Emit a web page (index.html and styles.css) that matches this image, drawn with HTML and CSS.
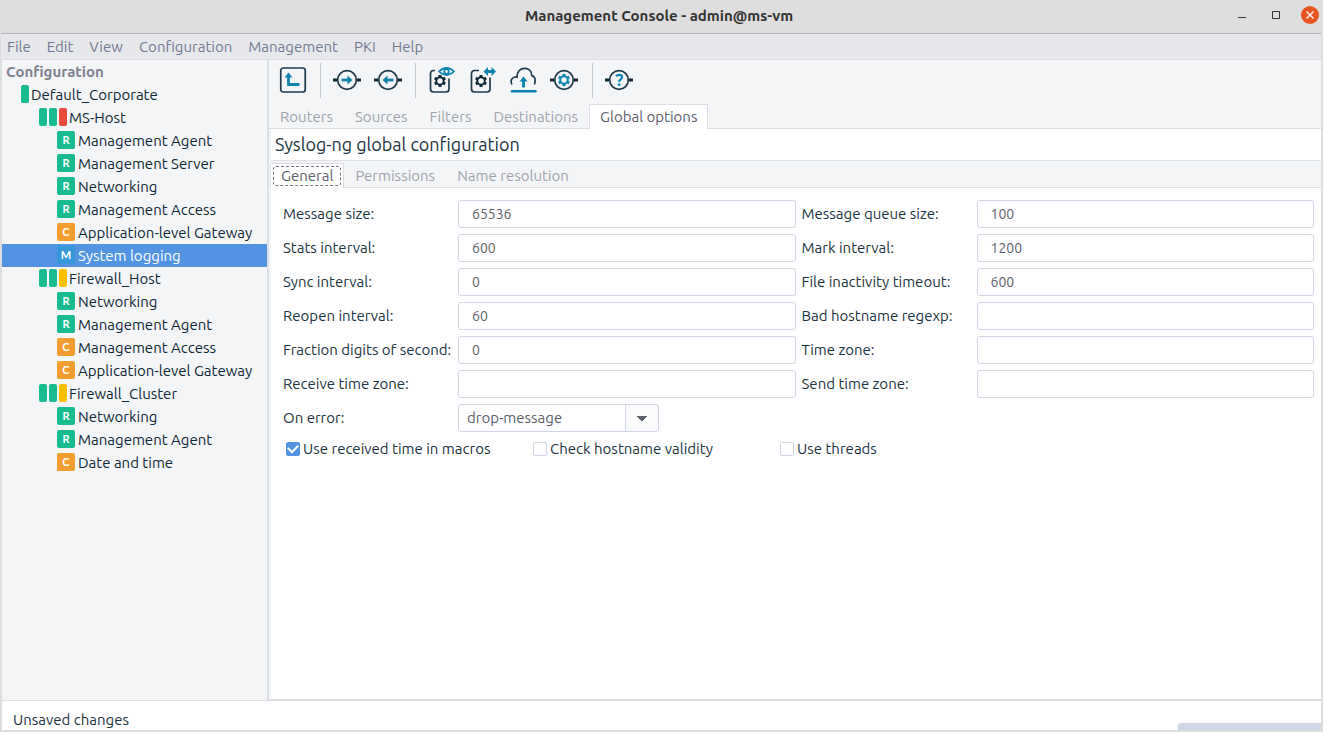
FILE: index.html
```html
<!DOCTYPE html>
<html lang="en">
<head>
<meta charset="utf-8">
<title>Management Console - admin@ms-vm</title>
<link rel="stylesheet" href="styles.css">
</head>
<body>
<svg class="defs" aria-hidden="true">
  <symbol id="gear" viewBox="-7 -7 14 14">
    <circle r="3.700" fill="none" stroke="currentColor" stroke-width="2"/>
    <path d="M0-6v2M0 4v2M-5.200-3l1.700 1M3.500 2l1.700 1M5.200-3L3.500-2M-3.500 2l-1.700 1" stroke="currentColor" stroke-width="3"/>
  </symbol>
</svg>
<header class="titlebar">
  <h1 class="window-title">Management Console - admin@ms-vm</h1>
  <div class="window-buttons">
    <button class="window-button" aria-label="Minimize"><svg width="18" height="18" viewBox="0 0 18 18"><path d="M5 11.500h8" stroke="#333"/></svg></button>
    <button class="window-button" aria-label="Maximize"><svg width="18" height="18" viewBox="0 0 18 18"><path d="M5.500 5.500h7v7h-7z" stroke="#333" fill="none"/></svg></button>
    <button class="window-button close" aria-label="Close"><svg width="18" height="18" viewBox="0 0 18 18"><circle cx="9" cy="9" r="9" fill="#e95420"/><path d="M5.500 5.500l7 7m0-7l-7 7" stroke="#fff" stroke-width="1.300"/></svg></button>
  </div>
</header>
<nav class="menubar">
  <button class="menu">File</button><button class="menu">Edit</button><button class="menu">View</button><button class="menu">Configuration</button><button class="menu">Management</button><button class="menu">PKI</button><button class="menu">Help</button>
</nav>
<div class="workspace">
  <aside class="sidebar">
    <h2 class="tree-title">Configuration</h2>
    <ul class="tree">
      <li class="node site"><span class="bar"></span>Default_Corporate</li>
      <li class="node host"><span class="bar"></span><span class="bar"></span><span class="bar red"></span>MS-Host</li>
      <li class="node"><span class="badge">R</span>Management Agent</li>
      <li class="node"><span class="badge">R</span>Management Server</li>
      <li class="node"><span class="badge">R</span>Networking</li>
      <li class="node"><span class="badge">R</span>Management Access</li>
      <li class="node"><span class="badge changed">C</span>Application-level Gateway</li>
      <li class="node selected"><span class="badge modified">M</span>System logging</li>
      <li class="node host"><span class="bar"></span><span class="bar"></span><span class="bar yellow"></span>Firewall_Host</li>
      <li class="node"><span class="badge">R</span>Networking</li>
      <li class="node"><span class="badge">R</span>Management Agent</li>
      <li class="node"><span class="badge changed">C</span>Management Access</li>
      <li class="node"><span class="badge changed">C</span>Application-level Gateway</li>
      <li class="node host"><span class="bar"></span><span class="bar"></span><span class="bar yellow"></span>Firewall_Cluster</li>
      <li class="node"><span class="badge">R</span>Networking</li>
      <li class="node"><span class="badge">R</span>Management Agent</li>
      <li class="node"><span class="badge changed">C</span>Date and time</li>
    </ul>
  </aside>
  <main class="content">
    <div class="toolbar">
      <div class="tool-group">
        <button class="tool" aria-label="Up"><svg width="28" height="28" viewBox="0 0 28 28"><rect x="1.750" y="2" width="24.500" height="24" rx="2.500" fill="none" stroke="#1f3a4b" stroke-width="1.700"/><path d="M9.500 11v7.500H20.500" fill="none" stroke="#0d84b0" stroke-width="2.800"/><path d="M5.500 11.500l4-5 4 5z" fill="#0d84b0"/></svg></button>
      </div>
      <div class="tool-group">
        <button class="tool" aria-label="Forward"><svg width="28" height="28" viewBox="0 0 28 28"><path d="M0 14h4.500M23.500 14H28" stroke="#0f2836" stroke-width="2.800"/><circle cx="14" cy="14" r="9.300" fill="none" stroke="#1f3a4b" stroke-width="1.700"/><path d="M8.500 14H15" stroke="#0d84b0" stroke-width="2.800"/><path d="M14.500 9.500l5 4.500-5 4.500z" fill="#0d84b0"/></svg></button>
        <button class="tool" aria-label="Back"><svg width="28" height="28" viewBox="0 0 28 28"><path d="M0 14h4.500M23.500 14H28" stroke="#0f2836" stroke-width="2.800"/><circle cx="14" cy="14" r="9.300" fill="none" stroke="#1f3a4b" stroke-width="1.700"/><path d="M19.500 14H13" stroke="#0d84b0" stroke-width="2.800"/><path d="M13.500 9.500l-5 4.500 5 4.500z" fill="#0d84b0"/></svg></button>
      </div>
      <div class="tool-group wide">
        <button class="tool" aria-label="View configuration"><svg width="28" height="28" viewBox="0 0 28 28"><path d="M8 4.500H6.500a3 3 0 0 0-3 3V23a3 3 0 0 0 3 3h12.500a3 3 0 0 0 3-3V12.500" fill="none" stroke="#1f3a4b" stroke-width="1.700"/><use href="#gear" x="6" y="8" width="14" height="14" color="#0f2836"/><path d="M12 5.500q7.500-7 15 0-7.500 7-15 0z" fill="#f4f5f7" stroke="#0d84b0" stroke-width="1.700"/><circle cx="19.500" cy="5.500" r="2.300" fill="none" stroke="#0d84b0" stroke-width="1.700"/></svg></button>
        <button class="tool" aria-label="Compare configuration"><svg width="28" height="28" viewBox="0 0 28 28"><path d="M11 4.500H6.500a3 3 0 0 0-3 3V23a3 3 0 0 0 3 3h12.500a3 3 0 0 0 3-3V11.500" fill="none" stroke="#1f3a4b" stroke-width="1.700"/><use href="#gear" x="6" y="8" width="14" height="14" color="#0f2836"/><path d="M18 5.500h6" stroke="#0d84b0" stroke-width="3"/><path d="M15.500 5.500l4.500-4.500v9zM28 5.500l-4.500-4.500v9z" fill="#0d84b0"/></svg></button>
        <button class="tool" aria-label="Upload"><svg width="28" height="28" viewBox="0 0 28 28"><path d="M3 18.500C1.200 15.500 2 11.700 6 11c.8-.2 1.400-.1 2 .1C8.200 5 11.800 2.400 15.800 2.400c4 0 6.900 3 7 7.300 3 .5 4.300 3.500 2.700 8.800" fill="none" stroke="#1f3a4b" stroke-width="1.700"/><path d="M14.500 21.500V14" stroke="#0d84b0" stroke-width="2.800"/><path d="M10.500 15.500l4-5 4 5z" fill="#0d84b0"/><path d="M3 25.300h23.500" stroke="#0d84b0" stroke-width="2.500" stroke-linecap="round"/></svg></button>
        <button class="tool" aria-label="Control service"><svg width="28" height="28" viewBox="0 0 28 28"><path d="M0 14h4.500M23.500 14H28" stroke="#0f2836" stroke-width="2.800"/><circle cx="14" cy="14" r="9.300" fill="none" stroke="#1f3a4b" stroke-width="1.700"/><use href="#gear" x="7" y="7" width="14" height="14" color="#0d84b0"/></svg></button>
      </div>
      <div class="tool-group">
        <button class="tool" aria-label="Help"><svg width="28" height="28" viewBox="0 0 28 28"><path d="M0 14h4.500M23.500 14H28" stroke="#0f2836" stroke-width="2.800"/><circle cx="14" cy="14" r="9.300" fill="none" stroke="#1f3a4b" stroke-width="1.700"/><path d="M11 10.300q1.300-1.400 3.100-1.400c1.800 0 3 .9 3 2.400 0 2.100-3 2.100-3 4.600" fill="none" stroke="#0d84b0" stroke-width="2.100"/><circle cx="14.100" cy="18.700" r="1.400" fill="#0d84b0"/></svg></button>
      </div>
    </div>
    <div class="tabs" role="tablist">
      <button class="tab" role="tab">Routers</button><button class="tab" role="tab">Sources</button><button class="tab" role="tab">Filters</button><button class="tab" role="tab">Destinations</button><button class="tab active" role="tab" aria-selected="true">Global options</button>
    </div>
    <h2 class="page-title">Syslog-ng global configuration</h2>
    <div class="tabs subtabs" role="tablist">
      <button class="tab active" role="tab" aria-selected="true"><span class="focus">General</span></button><button class="tab" role="tab">Permissions</button><button class="tab" role="tab">Name resolution</button>
    </div>
    <form class="form">
      <div class="fields">
        <label for="msg-size">Message size:</label><input class="field" id="msg-size" value="65536">
        <label for="queue">Message queue size:</label><input class="field" id="queue" value="100">
        <label for="stats">Stats interval:</label><input class="field" id="stats" value="600">
        <label for="mark">Mark interval:</label><input class="field" id="mark" value="1200">
        <label for="sync">Sync interval:</label><input class="field" id="sync" value="0">
        <label for="inactivity">File inactivity timeout:</label><input class="field" id="inactivity" value="600">
        <label for="reopen">Reopen interval:</label><input class="field" id="reopen" value="60">
        <label for="regexp">Bad hostname regexp:</label><input class="field" id="regexp">
        <label for="digits">Fraction digits of second:</label><input class="field" id="digits" value="0">
        <label for="zone">Time zone:</label><input class="field" id="zone">
        <label for="recv-zone">Receive time zone:</label><input class="field" id="recv-zone">
        <label for="send-zone">Send time zone:</label><input class="field" id="send-zone">
        <label for="on-error">On error:</label><select class="combo" id="on-error"><option>drop-message</option></select>
      </div>
      <div class="checks">
        <label class="check"><input type="checkbox" checked>Use received time in macros</label>
        <label class="check"><input type="checkbox">Check hostname validity</label>
        <label class="check"><input type="checkbox">Use threads</label>
      </div>
    </form>
  </main>
</div>
<footer class="statusbar"><span>Unsaved changes</span><div class="progress"></div></footer>
</body>
</html>
```
FILE: styles.css
```css
* { box-sizing: border-box; }
body {
  margin: 0;
  padding: 0 2px 2px 1px;
  min-height: 100vh;
  display: flex;
  flex-direction: column;
  background: #dedede;
  color: #1c3442;
  font: 15px/20px Ubuntu, "Noto Sans", sans-serif;
}
button, input, select { font: inherit; color: inherit; margin: 0; }
button { background: none; border: 0; padding: 0; }
svg { display: block; }
.defs { position: absolute; width: 0; height: 0; }

.titlebar {
  display: grid;
  grid-template-columns: 100px 1fr 100px;
  align-items: center;
  height: 34px;
  padding-bottom: 3px;
  border-bottom: 1px solid #b5b5b5;
}
.window-title { grid-column: 2; margin: 0; padding: 1px 4px 0 0; font-size: 15px; line-height: 20px; text-align: center; color: #333; }
.window-buttons { display: flex; justify-content: flex-end; gap: 16px; padding-right: 2px; }

.menubar {
  display: flex;
  height: 26px;
  padding-left: 1px;
  background: #e7e8eb;
  border-bottom: 1px solid #dcdee3;
  color: #727a92;
}
.menu { padding: 0 11px 0 5px; }

.workspace {
  flex: 1;
  display: flex;
  margin-left: 1px;
  background: #dcdfe6;
}
.sidebar { width: 265px; background: #f4f5f7; border-bottom: 1px solid #dce0e4; }
.tree-title { margin: 0; padding-left: 4px; font-size: 15px; line-height: 23px; color: #7e828e; }
.tree { list-style: none; margin: 0; padding: 0; color: #0f2836; }
.node { display: flex; align-items: center; gap: 2px; height: 23px; padding-left: 55px; white-space: nowrap; }
.node.site { padding-left: 19px; }
.node.host { padding-left: 37px; }
.node.selected { background: #5294e2; color: #fff; }
.bar, .badge { height: 18px; margin-bottom: 2px; border-radius: 2px; background: #17bb8f; }
.bar { width: 8px; }
.bar.red { background: #e74c3c; }
.bar.yellow { background: #ffc107; }
.badge {
  width: 18px;
  margin-right: 1px;
  color: #fff;
  font: bold 11px/17px Lato, sans-serif;
  text-align: center;
}
.badge.changed { background: #f39c2f; }
.badge.modified { background: #3498db; }

.content {
  flex: 1;
  min-width: 0;
  display: flex;
  flex-direction: column;
  margin-left: 2px;
  background: #f4f5f7;
  border-bottom: 2px solid #dce0e4;
}
.toolbar { display: flex; height: 44px; padding: 3px 0 6px; }
.tool-group { display: flex; align-items: flex-start; gap: 13px; padding: 3px 13px 0 12px; }
.tool-group:first-child { padding-left: 10px; }
.tool-group + .tool-group { border-left: 1px solid #c5c9ce; }
.tool-group.wide { padding: 3px 14px 0 11px; }

.tabs { display: flex; height: 25px; border-bottom: 1px solid #dcdfe6; }
.tab { height: 25px; padding: 0 11px; color: #a0a4ac; }
.tab.active { padding: 0 10px; background: #fff; border: 1px solid #dcdfe6; border-bottom: 0; color: #5c616c; }
.page-title {
  margin: 0 0 0 2px;
  padding: 0 4px 1px;
  font-size: 18px;
  line-height: 30px;
  font-weight: 400;
  background: #fff;
  border-bottom: 1px solid #dfe2e7;
}
.subtabs { margin-left: 1px; height: 27px; padding-top: 2px; }
.subtabs .tab.active { padding: 0 2px; }
.focus { display: block; padding: 0 7px; line-height: 18px; border: 1px dashed #777; border-radius: 3px; }

.form { flex: 1; margin-left: 2px; padding: 12px 7px 12px 12px; background: #fff; }
.fields { display: grid; grid-template-columns: 169px 1fr 169px 1fr; gap: 6px; align-items: center; }
.fields label { white-space: nowrap; }
.field, .combo { height: 28px; border: 1px solid #cfd6e6; border-radius: 3px; background: #fff; color: #5c616c; }
.field { width: 100%; min-width: 0; padding: 0 13px; font-size: 14px; }
.combo {
  appearance: none;
  width: 201px;
  padding: 0 40px 0 8px;
  background-color: #fff;
  background-image:
    linear-gradient(to bottom right, #5c616c 50%, transparent 51%),
    linear-gradient(to bottom left, #5c616c 50%, transparent 51%),
    linear-gradient(90deg, #cfd6e6 1px, #fbfbfc 1px);
  background-position: right 11px center, right 16px center, right;
  background-size: 5px 5px, 5px 5px, 33px 100%;
  background-repeat: no-repeat;
}
.checks { display: grid; grid-template-columns: 247px 247px 1fr; padding: 7px 0 0 3px; }
.check { display: flex; align-items: center; gap: 3px; }
.check input {
  appearance: none;
  display: grid;
  place-items: center;
  width: 14px;
  height: 14px;
  border: 1px solid #cfd6e6;
  border-radius: 2px;
  background: #fff;
}
.check input:checked { background: #5294e2; border-color: #5294e2; }
.check input:checked::before {
  content: "";
  width: 8px;
  height: 5px;
  margin-bottom: 3px;
  border: solid #fff;
  border-width: 0 0 2px 2px;
  transform: rotate(-45deg);
}

.statusbar {
  display: flex;
  justify-content: space-between;
  height: 29px;
  margin-left: 1px;
  padding: 9px 0 0 11px;
  background: #fff;
}
.progress { align-self: flex-end; width: 143px; height: 7px; border-radius: 3px 0 0 0; background: #cfd6e6; }
```
